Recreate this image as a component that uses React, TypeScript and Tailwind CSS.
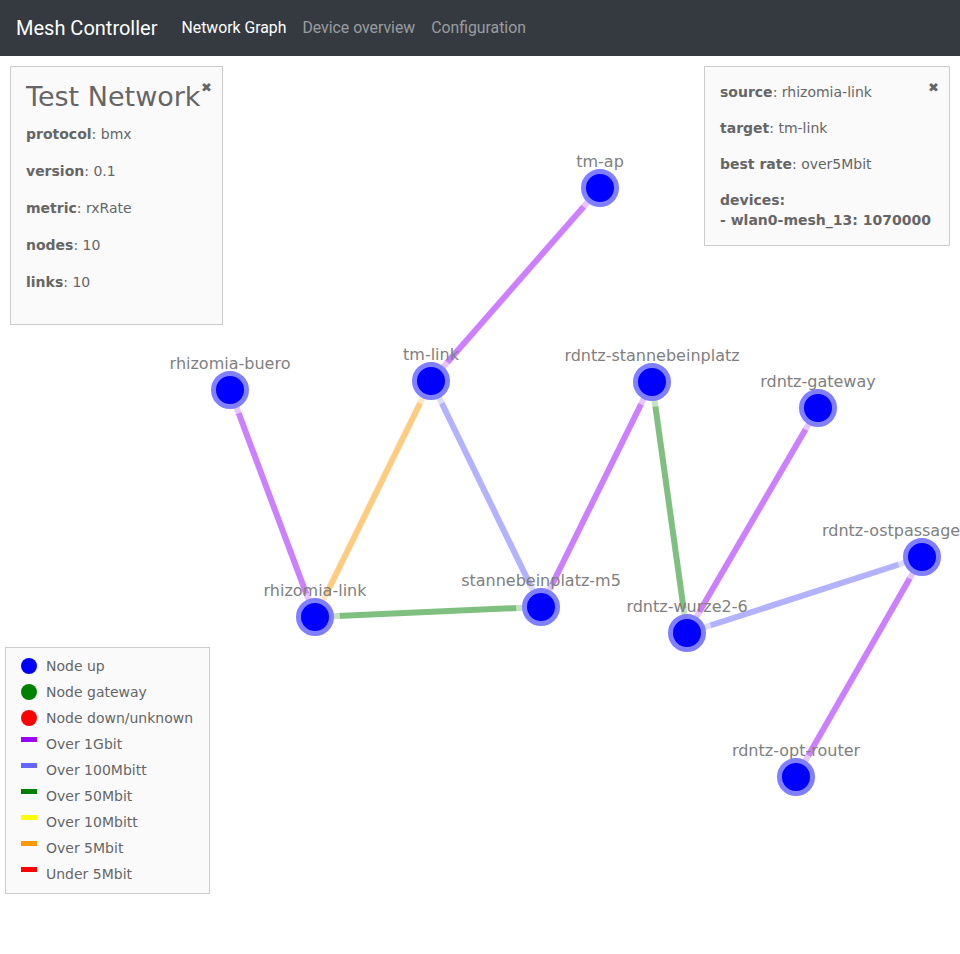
import React from "react";

type Node = { id: string; x: number; y: number; lx?: number; anchor?: "middle" | "start" };
const nodes: Node[] = [
  { id: "tm-ap", x: 600, y: 188 },
  { id: "rhizomia-buero", x: 230, y: 390 },
  { id: "tm-link", x: 431, y: 381 },
  { id: "rdntz-stannebeinplatz", x: 652, y: 382 },
  { id: "rdntz-gateway", x: 818, y: 408 },
  { id: "rdntz-ostpassage", x: 922, y: 557, lx: 822, anchor: "start" },
  { id: "rhizomia-link", x: 315, y: 617 },
  { id: "stannebeinplatz-m5", x: 541, y: 607 },
  { id: "rdntz-wurze2-6", x: 687, y: 633 },
  { id: "rdntz-opt-router", x: 796, y: 777 },
];

const PURPLE = "#9900ff";
const BLUE = "#6666ff";
const GREEN = "#008000";
const ORANGE = "#ff9900";

const links: [string, string, string][] = [
  ["tm-ap", "tm-link", PURPLE],
  ["rhizomia-buero", "rhizomia-link", PURPLE],
  ["tm-link", "rhizomia-link", ORANGE],
  ["tm-link", "stannebeinplatz-m5", BLUE],
  ["rhizomia-link", "stannebeinplatz-m5", GREEN],
  ["stannebeinplatz-m5", "rdntz-stannebeinplatz", PURPLE],
  ["rdntz-stannebeinplatz", "rdntz-wurze2-6", GREEN],
  ["rdntz-gateway", "rdntz-wurze2-6", PURPLE],
  ["rdntz-wurze2-6", "rdntz-ostpassage", BLUE],
  ["rdntz-ostpassage", "rdntz-opt-router", PURPLE],
];

const byId = (id: string) => nodes.find((n) => n.id === id)!;

function Graph() {
  return (
    <svg className="absolute inset-0" width={960} height={898} viewBox="0 0 960 898">
      <g transform="translate(0,-56)">
        {links.map(([a, b, c], i) => {
          const na = byId(a);
          const nb = byId(b);
          return (
            <line
              key={i}
              x1={na.x}
              y1={na.y}
              x2={nb.x}
              y2={nb.y}
              stroke={c}
              strokeWidth={6}
              strokeOpacity={0.5}
            />
          );
        })}
        {nodes.map((n) => (
          <g key={n.id}>
            <circle cx={n.x} cy={n.y} r={25} fill="#ffffff" fillOpacity={0.55} />
            <circle cx={n.x} cy={n.y} r={16.5} fill="#0000ff" stroke="#7f7fff" strokeWidth={5} />
          </g>
        ))}
        {nodes.map((n) => (
          <text
            key={n.id + "-l"}
            x={n.lx ?? n.x}
            y={n.y - 21}
            textAnchor={n.anchor ?? "middle"}
            fill="#808080"
            fontSize={16}
            fontFamily="'DejaVu Sans', sans-serif"
          >
            {n.id}
          </text>
        ))}
      </g>
    </svg>
  );
}

function Row({ k, v, lh = "leading-[21px]" }: { k: string; v: string; lh?: string }) {
  return (
    <p className={"mb-4 " + lh}>
      <b>{k}</b>: {v}
    </p>
  );
}

const legendItems: { kind: "dot" | "line"; color: string; label: string }[] = [
  { kind: "dot", color: "#0000ff", label: "Node up" },
  { kind: "dot", color: "#008000", label: "Node gateway" },
  { kind: "dot", color: "#ff0000", label: "Node down/unknown" },
  { kind: "line", color: "#9900ff", label: "Over 1Gbit" },
  { kind: "line", color: "#6666ff", label: "Over 100Mbitt" },
  { kind: "line", color: "#008000", label: "Over 50Mbit" },
  { kind: "line", color: "#ffff00", label: "Over 10Mbitt" },
  { kind: "line", color: "#ff9900", label: "Over 5Mbit" },
  { kind: "line", color: "#ff0000", label: "Under 5Mbit" },
];

export default function App() {
  return (
    <div className="flex h-[954px] w-[960px] flex-col overflow-hidden bg-white">
      <nav className="flex h-14 shrink-0 items-center bg-[#343a40] px-4 font-['Roboto',sans-serif]">
        <span className="mr-4 text-[20px] text-white">Mesh Controller</span>
        <span className="px-2 text-[15.8px] text-white">Network Graph</span>
        <span className="px-2 text-[15.8px] text-white/50">Device overview</span>
        <span className="px-2 text-[15.8px] text-white/50">Configuration</span>
      </nav>
      <main className="relative flex-1 font-['DejaVu_Sans',sans-serif] text-sm text-[#666]">
        <Graph />

        <div className="absolute left-[10px] top-[10px] w-[213px] border border-[#ccc] bg-[#fafafa] px-[15px] pb-[15px] pt-[12px]">
          <span className="absolute right-[10px] top-[14px] text-[13px] leading-none">✖</span>
          <h2 className="mb-[9px] text-[27px] leading-[36px]">Test Network</h2>
          <Row k="protocol" v="bmx" />
          <Row k="version" v="0.1" />
          <Row k="metric" v="rxRate" />
          <Row k="nodes" v="10" />
          <Row k="links" v="10" />
        </div>

        <div className="absolute right-[10px] top-[10px] w-[246px] border border-[#ccc] bg-[#fafafa] px-[15px] pt-[15px] pb-[15px]">
          <span className="absolute right-[10px] top-[14px] text-[13px] leading-none">✖</span>
          <Row k="source" v="rhizomia-link" lh="leading-[20px]" />
          <Row k="target" v="tm-link" lh="leading-[20px]" />
          <Row k="best rate" v="over5Mbit" lh="leading-[20px]" />
          <p className="leading-[20px]">
            <b>devices:</b>
            <br />
            <b>- wlan0-mesh_13: 1070000</b>
          </p>
        </div>

        <div className="absolute left-[5px] top-[591px] w-[205px] border border-[#ccc] bg-[#fafafa] px-[15px] pb-[6px] pt-[5px]">
          {legendItems.map((it) => (
            <div key={it.label} className="flex h-[26px] items-center gap-[9px]">
              {it.kind === "dot" ? (
                <span className="h-4 w-4 shrink-0 rounded-full" style={{ backgroundColor: it.color }} />
              ) : (
                <span className="flex h-4 w-4 shrink-0 items-start pt-[1px]">
                  <span className="h-[5px] w-4" style={{ backgroundColor: it.color }} />
                </span>
              )}
              <span className="leading-[21px]">{it.label}</span>
            </div>
          ))}
        </div>
      </main>
    </div>
  );
}
